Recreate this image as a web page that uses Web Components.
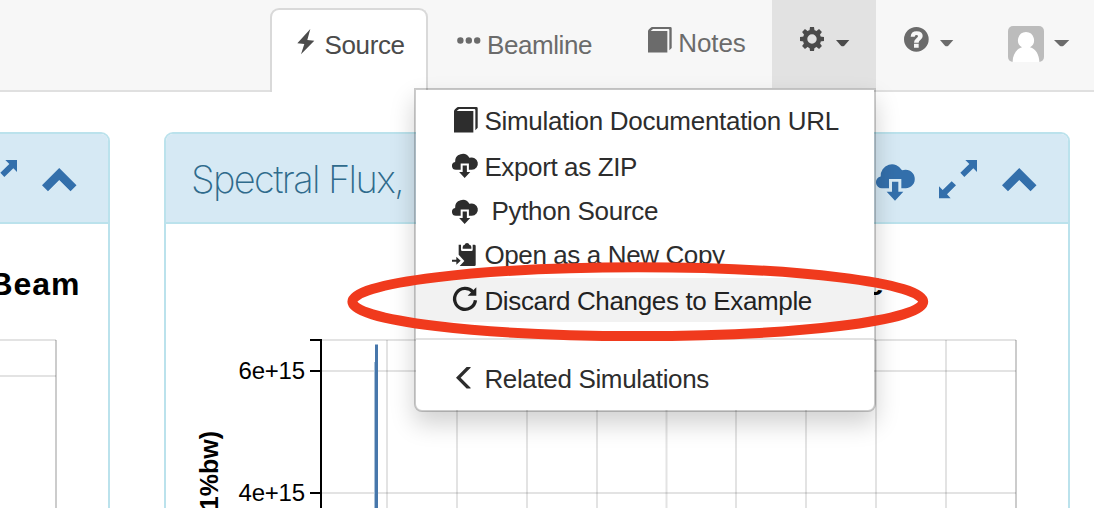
<!DOCTYPE html>
<html lang="en"><head><meta charset="utf-8"><title>Simulation</title>
<style>
html,body{margin:0;padding:0;height:508px;overflow:hidden;background:#fff}
body{font-family:"Liberation Sans",Arial,sans-serif;position:relative}
</style></head><body>
<sim-app></sim-app>
<script>
const attach=(el,html)=>{const t=document.createElement('template');t.innerHTML=html;const r=el.attachShadow({mode:'open'});r.append(t.content.cloneNode(true));return r;};

/* Text set to a fixed advance width through letter spacing. */
customElements.define('fit-text',class extends HTMLElement{
  connectedCallback(){
    if(this.shadowRoot)return;
    const size=+(this.getAttribute('size')||26),w=+this.getAttribute('w'),weight=this.getAttribute('weight')||400;
    const fam=this.getAttribute('face')||'Liberation Sans';
    const c=document.createElement('canvas').getContext('2d');
    c.font=`${weight} ${size}px "${fam}"`;
    const s=this.textContent,ls=(w-c.measureText(s).width)/s.length;
    attach(this,`<style>:host{display:block;flex:none;width:${w}px;white-space:pre;font:${weight} ${size}px/30px "${fam}",sans-serif;letter-spacing:${ls.toFixed(3)}px}</style><slot></slot>`);
  }
});

const cloud='<path d="M39 76H18A18 18 0 0 1 14 40.4A34 34 0 0 1 78 22A28 28 0 1 1 89 76H76V48H39Z"/><path d="M48 56H67V86H82L57 113L32 86H48Z"/>';
const gear=(()=>{let s='';for(let i=0;i<8;i++)s+=`<path d="M-2.6 -8L-2 -12H2L2.6 -8Z" transform="rotate(${i*45})"/>`;return s+'<path fill-rule="evenodd" d="M-9.2 0A9.2 9.2 0 1 1 9.2 0A9.2 9.2 0 1 1 -9.2 0ZM-4.7 0A4.7 4.7 0 1 0 4.7 0A4.7 4.7 0 1 0 -4.7 0Z"/>';})();
const ICONS={
  flash:['0 0 52 76','<path d="M40 0L1 43L22 45L12 76L52 35L31 33Z"/>'],
  dots:['0 0 24 7','<circle cx="3.4" cy="3.5" r="3.2"/><circle cx="11.8" cy="3.5" r="3.2"/><circle cx="20.2" cy="3.5" r="3.2"/>'],
  book:['0 0 71 77','<path d="M12 0H67Q71 0 71 4V63L64 70V9Q64 6 61 6H15L8 12H58V77H0V13Q0 10 3 7L8 2Q10 0 12 0Z"/>'],
  gear:['-12 -12 24 24',gear],
  question:['0 0 74 74','<path fill-rule="evenodd" d="M37 0A37 37 0 1 1 37 74A37 37 0 1 1 37 0ZM20 29H32Q32 24 37 24Q42 24 42 28Q42 31 36 35Q30 39 30 47H44Q44 43 49 39Q56 34 56 27Q56 13 38 13Q21 13 20 29ZM30 50V62H44V50Z"/>'],
  caret:['0 0 40 19','<path d="M0 0H40L25 17Q20 21 15 17Z"/>'],
  avatar:['0 0 36 36','<rect width="36" height="36" rx="5" fill="#bcbcbc"/><path fill="#fff" d="M18 6A8 8.2 0 0 1 22 21.3C28 23 31.2 29 31.4 36H4.6C4.8 29 8 23 14 21.3A8 8.2 0 0 1 18 6Z"/>'],
  cloud:['0 0 117 113',cloud],
  resize:['237 120 114 115','<path d="M316 120H351V156L340 145L313 171L301 158L328 132ZM272 235H237V199L248 210L275 184L288 196L261 223Z"/>'],
  up:['427 144 104 70','<path d="M479 144L531 196L513 214L479 180L445 214L427 196Z"/>'],
  copy:['126 459 71 69','<path d="M146 464H153V479Q153 483 157 483H184Q188 483 188 479V464H193Q197 464 197 468V524Q197 528 193 528H149L163 513L146 494ZM158 471Q158 465 164 464Q165 459 171 459Q177 459 178 464Q184 465 184 471V476H158ZM126 509H139V500L152 512L139 524V515H126Z"/>'],
  repeat:['338 140 73 74','<path fill="none" stroke="currentColor" stroke-width="10" d="M398 155A31.5 31.5 0 1 0 405.5 180"/><path d="M408 141V166H382Z"/>'],
  left:['349 380 44 64','<path d="M381 380H393V382L363 412L393 442V444H381L349 412Z"/>']
};
customElements.define('ui-icon',class extends HTMLElement{
  connectedCallback(){
    if(this.shadowRoot)return;
    const [vb,body]=ICONS[this.getAttribute('name')];
    attach(this,`<style>:host{display:block;flex:none;width:${this.getAttribute('w')}px;height:${this.getAttribute('h')}px}svg{display:block;width:100%;height:100%;overflow:visible}</style><svg viewBox="${vb}" preserveAspectRatio="none" fill="currentColor">${body}</svg>`);
  }
});

customElements.define('menu-item',class extends HTMLElement{
  connectedCallback(){
    if(this.shadowRoot)return;
    attach(this,`<style>:host{display:flex;box-sizing:border-box;height:44px;padding:8px 0 0 36px;color:#2d2d2d}
    :host([tall]){height:46px}:host([active]){background:#f2f2f2;color:#222}
    .i{flex:none;width:32.4px}</style><div class="i"><slot name="icon"></slot></div><slot></slot>`);
  }
});
customElements.define('settings-menu',class extends HTMLElement{
  connectedCallback(){
    if(this.shadowRoot)return;
    attach(this,`<style>:host{display:block;position:absolute;z-index:5;right:0;top:88px;width:462px;height:324px;box-sizing:border-box;padding:8px 0 10px;background:#fff;background-clip:padding-box;border:2px solid rgba(0,0,0,.2);border-radius:0 0 8px 8px;box-shadow:0 12px 24px rgba(0,0,0,.18)}
    hr{border:0;height:2px;background:#e2e2e2;margin:16px 0}</style>
    <menu-item tall><ui-icon slot="icon" name="book" w="23.7" h="25.5" style="margin:.7px 0 0 2px"></ui-icon><fit-text w="354.6">Simulation Documentation URL</fit-text></menu-item>
    <menu-item><ui-icon slot="icon" name="cloud" w="26" h="25" style="margin-top:1px"></ui-icon><fit-text w="152.6">Export as ZIP</fit-text></menu-item>
    <menu-item><ui-icon slot="icon" name="cloud" w="26" h="25" style="margin-top:3px"></ui-icon><fit-text w="166.8" style="margin-left:7px">Python Source</fit-text></menu-item>
    <menu-item tall><ui-icon slot="icon" name="copy" w="23.7" h="23" style="margin-top:3px"></ui-icon><fit-text w="240.2">Open as a New Copy</fit-text></menu-item>
    <menu-item active><ui-icon slot="icon" name="repeat" w="24.3" h="24.6" style="margin:.7px 0 0 .7px"></ui-icon><fit-text w="327.6">Discard Changes to Example</fit-text></menu-item>
    <hr>
    <menu-item><ui-icon slot="icon" name="left" w="14.6" h="21.4" style="margin:2.7px 0 0 4.4px"></ui-icon><fit-text w="224.6">Related Simulations</fit-text></menu-item>`);
  }
});

customElements.define('nav-item',class extends HTMLElement{
  connectedCallback(){
    if(this.shadowRoot)return;
    attach(this,`<style>:host{display:flex;flex:none;align-items:flex-start;box-sizing:border-box;height:90px;color:#6b6b6b}
    :host([tab]){height:84px;margin-top:8px;border:2px solid #d9d9d9;border-bottom:0;border-radius:9px 9px 0 0;background:#fff;color:#4b4b4b}
    :host([open]){position:relative;background:#e2e2e2;color:#4b4b4b;height:88px}</style><slot></slot>`);
  }
});
customElements.define('nav-bar',class extends HTMLElement{
  connectedCallback(){
    if(this.shadowRoot)return;
    attach(this,`<style>:host{display:flex;box-sizing:border-box;height:92px;background:#f7f7f7;border-bottom:2px solid #e0e0e0;padding-left:270px;position:relative;z-index:3}</style>
    <nav-item tab style="width:158px"><ui-icon name="flash" w="17.3" h="25.3" style="margin:19px 0 0 24.8px"></ui-icon><fit-text w="80" style="margin:20px 0 0 10.5px">Source</fit-text></nav-item>
    <nav-item style="width:188px"><ui-icon name="dots" w="24" h="7" style="margin:37px 0 0 29px"></ui-icon><fit-text w="105" style="margin:30px 0 0 6px">Beamline</fit-text></nav-item>
    <nav-item style="width:156px"><ui-icon name="book" w="23.7" h="25.6" style="margin:26.7px 0 0 32.3px"></ui-icon><fit-text w="67.4" style="margin:28px 0 0 6.3px">Notes</fit-text></nav-item>
    <nav-item open style="width:104px"><ui-icon name="gear" w="24" h="24" style="margin:27.3px 0 0 28px"></ui-icon><ui-icon name="caret" w="13.3" h="6.3" style="margin:40px 0 0 12.2px"></ui-icon><settings-menu></settings-menu></nav-item>
    <nav-item style="width:104px"><ui-icon name="question" w="24.7" h="24.7" style="margin:27px 0 0 28px"></ui-icon><ui-icon name="caret" w="13.3" h="6.3" style="margin:40px 0 0 11.6px"></ui-icon></nav-item>
    <nav-item style="width:114px"><ui-icon name="avatar" w="36" h="36" style="margin:26px 0 0 28px"></ui-icon><ui-icon name="caret" w="15.3" h="6.3" style="margin:40px 0 0 10.4px"></ui-icon></nav-item>`);
  }
});

customElements.define('plot-panel',class extends HTMLElement{
  connectedCallback(){
    if(this.shadowRoot)return;
    attach(this,`<style>:host{display:block;flex:none;box-sizing:border-box;height:400px;border:2px solid #bbe2ec;border-radius:9px;background:#fff;overflow:hidden}
    header{display:flex;box-sizing:border-box;height:90px;background:#d6e9f4;border-bottom:2px solid #bbe2ec;color:#2f6b8c;padding:0 31.3px 0 25px}
    .title{flex:1;padding-top:30px}.tools{display:flex;color:#336fab}</style>
    <header><div class="title"><slot name="title"></slot></div><div class="tools">
    <ui-icon name="cloud" w="39" h="37.7" style="margin:29.3px 24px 0 0"></ui-icon><ui-icon name="resize" w="38" h="38.3" style="margin:26px 25.3px 0 0"></ui-icon><ui-icon name="up" w="34.5" h="23.3" style="margin-top:34px"></ui-icon></div></header><slot></slot>`);
  }
});

/* Chart drawings use window coordinates through their viewBox. */
customElements.define('flux-chart',class extends HTMLElement{
  connectedCallback(){
    if(this.shadowRoot)return;
    let g='';
    for(let i=0;i<9;i++)g+=`<path d="M${[387,457,527,597,666.5,736,806,876,946][i]} 340V508"/>`;
    attach(this,`<style>:host{display:block}svg{display:block}text{font-family:"Liberation Sans",Arial,sans-serif}</style>
    <svg width="902" height="284" viewBox="166 224 902 284">
    <text x="668" y="295" font-size="32" font-weight="700" text-anchor="middle" textLength="431">Flux through Finite Aperture</text>
    <g stroke="#000" stroke-opacity=".11" stroke-width="2" fill="none"><path d="M322 340H1016M322 371H1016M322 493H1016"/>${g}<path stroke-opacity=".2" d="M1016 340V508"/></g>
    <path d="M375 362V508" stroke="#a9c1d8" stroke-width="2"/><path d="M376.5 344.5V508" stroke="#4777ab" stroke-width="3"/>
    <path d="M310 340H321V508M310 371H321M310 493H321" fill="none" stroke="#000" stroke-width="2"/>
    <g font-size="24" text-anchor="end"><text x="305" y="378.5" textLength="66.4">6e+15</text><text x="305" y="500.5" textLength="66.4">4e+15</text></g>
    <text transform="translate(217.5 431) rotate(-90)" font-size="25" font-weight="700" text-anchor="end">1%bw)</text>
    </svg>`);
  }
});
customElements.define('beam-chart',class extends HTMLElement{
  connectedCallback(){
    if(this.shadowRoot)return;
    attach(this,`<style>:host{display:block}svg{display:block}text{font-family:"Liberation Sans",Arial,sans-serif}</style>
    <svg width="308" height="284" viewBox="-200 224 308 284"><text x="79.5" y="295" font-size="32" font-weight="700" text-anchor="end" textLength="90">Beam</text>
    <g stroke="#000" stroke-opacity=".11" stroke-width="2" fill="none"><path d="M-150 340H56M-150 376H56"/><path stroke-opacity=".2" d="M56 340V508"/></g></svg>`);
  }
});
customElements.define('highlight-ring',class extends HTMLElement{
  connectedCallback(){
    if(this.shadowRoot)return;
    attach(this,`<style>:host{display:block;position:absolute;z-index:9;left:342px;top:256px;pointer-events:none}svg{display:block}</style>
    <svg width="592" height="92"><ellipse cx="295.8" cy="45.7" rx="285.4" ry="34.4" fill="none" stroke="#f03a1d" stroke-width="10"/></svg>`);
  }
});
customElements.define('sim-app',class extends HTMLElement{
  connectedCallback(){
    if(this.shadowRoot)return;
    attach(this,`<style>:host{display:block;position:relative;width:1094px;height:508px;overflow:hidden}
    main{display:flex;gap:54px;padding-top:40px;margin-left:-202px}</style>
    <nav-bar></nav-bar>
    <main><plot-panel style="width:312px"><beam-chart></beam-chart></plot-panel>
    <plot-panel style="width:906px"><fit-text slot="title" face="Inter" weight="200" size="38" w="212">Spectral Flux,</fit-text><flux-chart></flux-chart></plot-panel></main>
    <highlight-ring></highlight-ring>`);
  }
});
</script></body></html>
